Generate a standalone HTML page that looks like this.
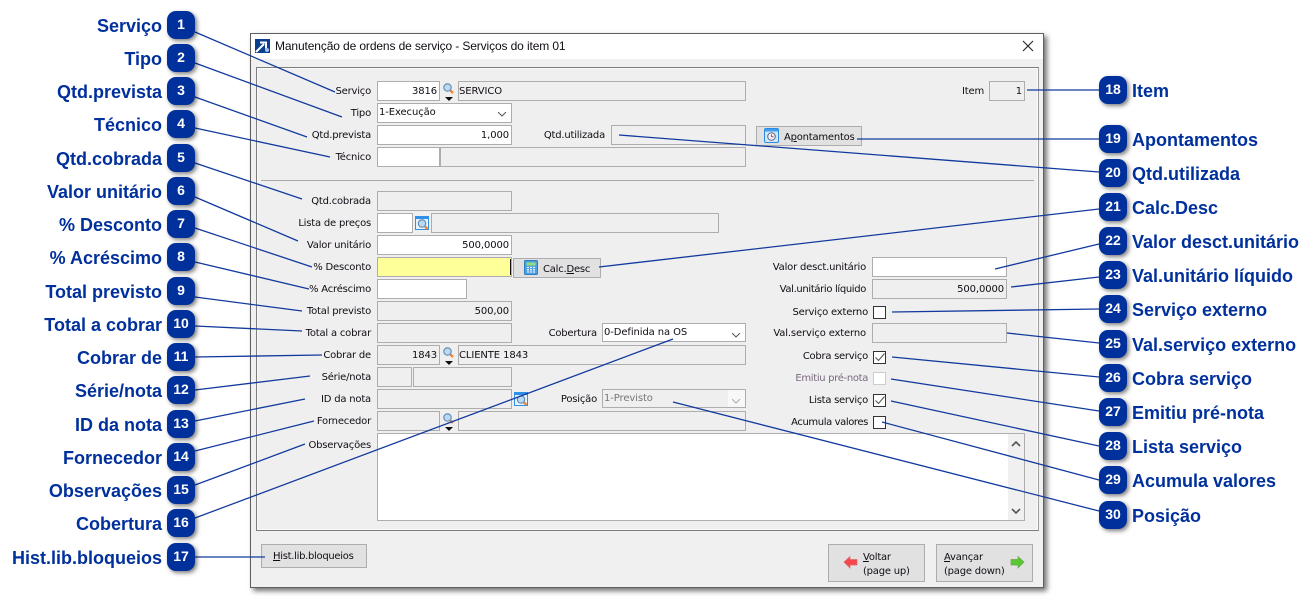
<!DOCTYPE html>
<html lang="pt"><head><meta charset="utf-8"><title>Manutenção de ordens de serviço</title>
<style>
html,body{margin:0;padding:0;background:#fff}
#p{position:relative;width:1316px;height:599px;overflow:hidden;background:#fff;font-family:"DejaVu Sans","Liberation Sans",sans-serif;font-size:10px;color:#110c14}
#p div,#p span.a{position:absolute;box-sizing:border-box}
.win{left:250px;top:33px;width:794px;height:555px;background:#f0f0f0;border:1px solid #5f5f5f;box-shadow:3px 3px 5px rgba(0,0,0,.55)}
.tb{left:251px;top:34px;width:792px;height:25px;background:#fff}
.ttl{left:275px;top:39px;font-family:"Liberation Sans",sans-serif;font-size:12px;line-height:14px;white-space:nowrap;letter-spacing:-.12px}
.grp{left:256px;top:67px;width:783px;height:464px;border:1px solid #7d7d7d;border-right-color:#a0a0a0;background:#efefef;box-shadow:inset 0 0 0 1px #fafafa}
.sep{left:261px;top:180px;width:773px;height:1px;background:#aaa}
.l{white-space:nowrap;text-align:right;letter-spacing:-.2px;line-height:14px;margin-top:1px}
.f{border:1px solid #adadad;background:#efefef;height:20px;line-height:20px;padding:0 2px;white-space:nowrap;letter-spacing:-.1px}
.w{background:#fff}.r{text-align:right}
.b{background:#e1e1e1;border:1px solid #adadad;white-space:nowrap;letter-spacing:-.22px}
.c{width:13px;height:13px;border:1px solid #333;background:#fff;left:873px}
.h{font-family:"Liberation Sans",sans-serif;font-weight:700;font-size:18px;color:#00309c;white-space:nowrap;line-height:24px;margin-top:1px}
.hl{right:1154px;text-align:right}
.hr{left:1132px}
.n{width:28px;height:28px;border-radius:9px;background:#00309c;color:#fff;font-family:"Liberation Sans",sans-serif;font-weight:700;font-size:14px;line-height:27px;text-align:center;box-shadow:2px 2px 4px rgba(0,0,0,.5)}
.nl{left:167px}.nr{left:1099px}
u{text-underline-offset:1px}
svg{position:absolute}
</style></head><body><div id="p">
<svg width="0" height="0" style="left:0;top:0"><defs>
<g id="mag"><circle cx="4.5" cy="4.5" r="3.7" fill="#bcd9f2" stroke="#5d87ad" stroke-width="1.1"/><path d="M7.5 7.5L10 10" stroke="#e8843c" stroke-width="2.4"/></g>
<g id="chev"><path d="M0 0L4 4L8 0" fill="none" stroke="#555" stroke-width="1"/></g>
</defs></svg>

<div class="win"></div><div class="tb"></div>
<svg style="left:255px;top:39px" width="15" height="14"><rect width="15" height="14" fill="#0a3f8f"/><path d="M1 13L9 5M5 3.5H11V9.5" stroke="#fff" stroke-width="2" fill="none"/><circle cx="12" cy="11" r="2" fill="#9fc0e8"/></svg>
<div class="ttl">Manutenção de ordens de serviço - Serviços do item 01</div>
<svg style="left:1022px;top:40px" width="12" height="12"><path d="M1 1L11 11M11 1L1 11" stroke="#222" stroke-width="1.1"/></svg>
<div class="grp"></div><div class="sep"></div>

<div class="l" style="right:945px;top:84px">Serviço</div>
<div class="l" style="right:945px;top:106px">Tipo</div>
<div class="l" style="right:945px;top:128px">Qtd.prevista</div>
<div class="l" style="right:945px;top:150px">Técnico</div>
<div class="l" style="right:945px;top:194px">Qtd.cobrada</div>
<div class="l" style="right:945px;top:216px">Lista de preços</div>
<div class="l" style="right:945px;top:238px">Valor unitário</div>
<div class="l" style="right:945px;top:260px">% Desconto</div>
<div class="l" style="right:945px;top:282px">% Acréscimo</div>
<div class="l" style="right:945px;top:304px">Total previsto</div>
<div class="l" style="right:945px;top:326px">Total a cobrar</div>
<div class="l" style="right:945px;top:348px">Cobrar de</div>
<div class="l" style="right:945px;top:370px">Série/nota</div>
<div class="l" style="right:945px;top:392px">ID da nota</div>
<div class="l" style="right:945px;top:414px">Fornecedor</div>
<div class="l" style="right:945px;top:438px">Observações</div>
<div class="l" style="right:711px;top:128px">Qtd.utilizada</div>
<div class="l" style="right:719px;top:326px">Cobertura</div>
<div class="l" style="right:719px;top:392px">Posição</div>
<div class="l" style="right:332px;top:84px">Item</div>
<div class="l" style="right:450px;top:260px">Valor desct.unitário</div>
<div class="l" style="right:450px;top:282px;letter-spacing:-.35px">Val.unitário líquido</div>
<div class="l" style="right:448px;top:305px">Serviço externo</div>
<div class="l" style="right:450px;top:326px;letter-spacing:-.15px">Val.serviço externo</div>
<div class="l" style="right:448px;top:349px;letter-spacing:-.27px">Cobra serviço</div>
<div class="l" style="right:448px;top:371px;color:#7a6a80;letter-spacing:-.33px">Emitiu pré-nota</div>
<div class="l" style="right:448px;top:393px;letter-spacing:-.27px">Lista serviço</div>
<div class="l" style="right:448px;top:415px;letter-spacing:-.4px">Acumula valores</div>

<div class="f w r" style="left:377px;top:81px;width:63px">3816</div>
<div class="f" style="left:458px;top:81px;width:288px;padding-left:0">SERVICO</div>
<div class="f w" style="left:377px;top:103px;width:135px;padding-left:1px;line-height:17px">1-Execução</div>
<div class="f w r" style="left:377px;top:125px;width:135px">1,000</div>
<div class="f" style="left:611px;top:125px;width:135px"></div>
<div class="f w" style="left:377px;top:147px;width:63px"></div>
<div class="f" style="left:440px;top:147px;width:306px"></div>
<div class="f" style="left:377px;top:191px;width:135px"></div>
<div class="f w" style="left:377px;top:213px;width:36px"></div>
<div class="f" style="left:431px;top:213px;width:288px"></div>
<div class="f w r" style="left:377px;top:235px;width:135px">500,0000</div>
<div class="f" style="left:377px;top:257px;width:135px;background:#ffff99"></div>
<div style="left:510px;top:259px;width:1px;height:16px;background:#111"></div>
<div class="f w" style="left:377px;top:279px;width:90px"></div>
<div class="f r" style="left:377px;top:301px;width:135px">500,00</div>
<div class="f" style="left:377px;top:323px;width:135px"></div>
<div class="f w" style="left:602px;top:323px;width:144px;height:19px;line-height:17px;padding-left:1px">0-Definida na OS</div>
<div class="f r" style="left:377px;top:345px;width:63px">1843</div>
<div class="f" style="left:458px;top:345px;width:288px;padding-left:0">CLIENTE 1843</div>
<div class="f" style="left:377px;top:367px;width:35px"></div>
<div class="f" style="left:413px;top:367px;width:99px"></div>
<div class="f" style="left:377px;top:389px;width:135px"></div>
<div class="f" style="left:602px;top:389px;width:144px;height:19px;line-height:17px;padding-left:1px;color:#777">1-Previsto</div>
<div style="left:728px;top:390px;width:17px;height:17px;background:#f8f8f8"></div>
<div class="f" style="left:377px;top:411px;width:63px"></div>
<div class="f" style="left:458px;top:411px;width:288px"></div>
<div class="f w" style="left:377px;top:433px;width:648px;height:88px"></div>
<div style="left:1008px;top:434px;width:16px;height:86px;background:#f0f0f0"></div>
<svg style="left:1011px;top:441px" width="10" height="6"><path d="M1 5L5 1L9 5" fill="none" stroke="#555" stroke-width="1.6"/></svg>
<svg style="left:1011px;top:508px" width="10" height="6"><path d="M1 1L5 5L9 1" fill="none" stroke="#555" stroke-width="1.6"/></svg>
<div class="f r" style="left:989px;top:81px;width:36px">1</div>
<div class="f w" style="left:872px;top:257px;width:135px"></div>
<div class="f r" style="left:872px;top:279px;width:135px">500,0000</div>
<div class="f" style="left:872px;top:323px;width:135px"></div>

<svg style="left:498px;top:112px" width="9" height="5"><use href="#chev"/></svg>
<svg style="left:732px;top:333px" width="9" height="5"><use href="#chev"/></svg>
<svg style="left:732px;top:399px" width="9" height="5"><path d="M0 0L4 4L8 0" fill="none" stroke="#aaa"/></svg>

<svg style="left:443px;top:83px" width="11" height="11"><use href="#mag"/></svg>
<svg style="left:445px;top:97px" width="9" height="5"><path d="M0 0H8L4 4Z" fill="#111"/></svg>
<svg style="left:443px;top:347px" width="11" height="11"><use href="#mag"/></svg>
<svg style="left:445px;top:361px" width="9" height="5"><path d="M0 0H8L4 4Z" fill="#111"/></svg>
<svg style="left:443px;top:413px" width="11" height="11"><use href="#mag"/></svg>
<svg style="left:445px;top:427px" width="9" height="5"><path d="M0 0H8L4 4Z" fill="#111"/></svg>
<svg style="left:415px;top:216px" width="14" height="14"><rect x=".5" y=".5" width="13" height="13" fill="#e8f3fc" stroke="#2e90e8"/><rect x="1" y="1" width="12" height="2" fill="#2e90e8"/><g transform="translate(2.5 3)"><use href="#mag"/></g></svg>
<svg style="left:514px;top:392px" width="14" height="14"><rect x=".5" y=".5" width="13" height="13" fill="#e8f3fc" stroke="#2e90e8"/><rect x="1" y="1" width="12" height="2" fill="#2e90e8"/><g transform="translate(2.5 3)"><use href="#mag"/></g></svg>

<div class="b" style="left:756px;top:126px;width:106px;height:20px;padding:4px 0 0 27px;line-height:13px">A<u>p</u>ontamentos</div>
<svg style="left:764px;top:128px" width="15" height="15"><rect x=".5" y=".5" width="14" height="14" rx="1.5" fill="#cfe6fb" stroke="#2a8be0"/><rect x="1" y="1" width="13" height="2.5" fill="#3f9ef0"/><circle cx="7.5" cy="8.5" r="3.8" fill="#eef" stroke="#667"/><path d="M7.5 6.5V8.5L9.5 9" stroke="#445" fill="none" stroke-width=".8"/></svg>
<div class="b" style="left:513px;top:258px;width:88px;height:20px;padding:4px 0 0 29px;line-height:13px">Calc.<u>D</u>esc</div>
<svg style="left:524px;top:260px" width="14" height="15"><rect x=".5" y=".5" width="13" height="14" rx="1" fill="#4f9fe0" stroke="#2f7fc0"/><rect x="2.5" y="2.5" width="9" height="3" fill="#8fe07a"/><path d="M3 7.5H11M3 9.8H11M3 12H11" stroke="#e6f2fc" stroke-width="1.3" stroke-dasharray="2 1"/></svg>
<div class="b" style="left:261px;top:544px;width:106px;height:24px;padding:5px 0 0 11px;line-height:13px;letter-spacing:-.3px"><u>H</u>ist.lib.bloqueios</div>
<div class="b" style="left:828px;top:544px;width:97px;height:38px;padding:6px 0 0 34px;line-height:14px"><u>V</u>oltar<br>(page up)</div>
<div class="b" style="left:936px;top:544px;width:97px;height:38px;padding:6px 0 0 7px;line-height:14px"><u>A</u>vançar<br>(page down)</div>
<svg style="left:843px;top:555px" width="15" height="15"><path d="M1 7L7 1.5V4.5H14V10H7V13Z" fill="#f4484c" stroke="#e06a6a" stroke-width=".7"/></svg>
<svg style="left:1010px;top:555px" width="15" height="15"><path d="M14 7L8 1.5V4.5H1V10H8V13Z" fill="#58c832" stroke="#6aa84a" stroke-width=".7"/></svg>

<div class="c" style="top:306px"></div>
<div class="c" style="top:351px"></div>
<div class="c" style="top:372px;border-color:#ccc"></div>
<div class="c" style="top:394px"></div>
<div class="c" style="top:416px"></div>
<svg style="left:875px;top:353px" width="10" height="9"><path d="M.5 4.5L3.5 7.5L9.5 .5" fill="none" stroke="#555" stroke-width="1.1"/></svg>
<svg style="left:875px;top:396px" width="10" height="9"><path d="M.5 4.5L3.5 7.5L9.5 .5" fill="none" stroke="#555" stroke-width="1.1"/></svg>

<svg style="left:0;top:0" width="1316" height="599" fill="none" stroke="#123a9e" stroke-width="1.3">
<path d="M195 32L335 92M195 63L342 117M195 97L307 137M195 128L330 157M195 163L302 199M195 197L298 241M195 228L312 267M195 262L309 289M195 297L302 311M195 326L302 331M195 357L322 355M195 390L310 376M195 421L305 399M195 451L314 421M195 485L305 444M195 518L673 339M195 557L265 557M1099 90L1027 90M1099 139L857 139M1099 172L619 135M1099 209L599 267M1099 244L995 269M1099 277L1011 287M1099 309L892 312M1099 343L1007 333M1099 377L892 357M1099 411L891 379M1099 446L891 401M1099 480L882 422M1099 511L673 402"/>
</svg>

<div class="h hl" style="top:13px">Serviço</div><div class="n nl" style="top:11px">1</div>
<div class="h hl" style="top:46px">Tipo</div><div class="n nl" style="top:44px">2</div>
<div class="h hl" style="top:79px">Qtd.prevista</div><div class="n nl" style="top:77px">3</div>
<div class="h hl" style="top:112px">Técnico</div><div class="n nl" style="top:110px">4</div>
<div class="h hl" style="top:146px">Qtd.cobrada</div><div class="n nl" style="top:144px">5</div>
<div class="h hl" style="top:179px">Valor unitário</div><div class="n nl" style="top:177px">6</div>
<div class="h hl" style="top:212px">% Desconto</div><div class="n nl" style="top:210px">7</div>
<div class="h hl" style="top:245px">% Acréscimo</div><div class="n nl" style="top:243px">8</div>
<div class="h hl" style="top:279px">Total previsto</div><div class="n nl" style="top:277px">9</div>
<div class="h hl" style="top:312px">Total a cobrar</div><div class="n nl" style="top:310px">10</div>
<div class="h hl" style="top:345px">Cobrar de</div><div class="n nl" style="top:343px">11</div>
<div class="h hl" style="top:378px">Série/nota</div><div class="n nl" style="top:376px">12</div>
<div class="h hl" style="top:412px">ID da nota</div><div class="n nl" style="top:410px">13</div>
<div class="h hl" style="top:445px">Fornecedor</div><div class="n nl" style="top:443px">14</div>
<div class="h hl" style="top:478px">Observações</div><div class="n nl" style="top:476px">15</div>
<div class="h hl" style="top:511px">Cobertura</div><div class="n nl" style="top:509px">16</div>
<div class="h hl" style="top:545px">Hist.lib.bloqueios</div><div class="n nl" style="top:543px">17</div>

<div class="n nr" style="top:76px">18</div><div class="h hr" style="top:78px">Item</div>
<div class="n nr" style="top:125px">19</div><div class="h hr" style="top:127px">Apontamentos</div>
<div class="n nr" style="top:159px">20</div><div class="h hr" style="top:161px">Qtd.utilizada</div>
<div class="n nr" style="top:193px">21</div><div class="h hr" style="top:195px">Calc.Desc</div>
<div class="n nr" style="top:227px">22</div><div class="h hr" style="top:229px">Valor desct.unitário</div>
<div class="n nr" style="top:261px">23</div><div class="h hr" style="top:263px">Val.unitário líquido</div>
<div class="n nr" style="top:295px">24</div><div class="h hr" style="top:297px">Serviço externo</div>
<div class="n nr" style="top:330px">25</div><div class="h hr" style="top:332px">Val.serviço externo</div>
<div class="n nr" style="top:364px">26</div><div class="h hr" style="top:366px">Cobra serviço</div>
<div class="n nr" style="top:398px">27</div><div class="h hr" style="top:400px">Emitiu pré-nota</div>
<div class="n nr" style="top:432px">28</div><div class="h hr" style="top:434px">Lista serviço</div>
<div class="n nr" style="top:466px">29</div><div class="h hr" style="top:468px">Acumula valores</div>
<div class="n nr" style="top:501px">30</div><div class="h hr" style="top:503px">Posição</div>
</div></body></html>
